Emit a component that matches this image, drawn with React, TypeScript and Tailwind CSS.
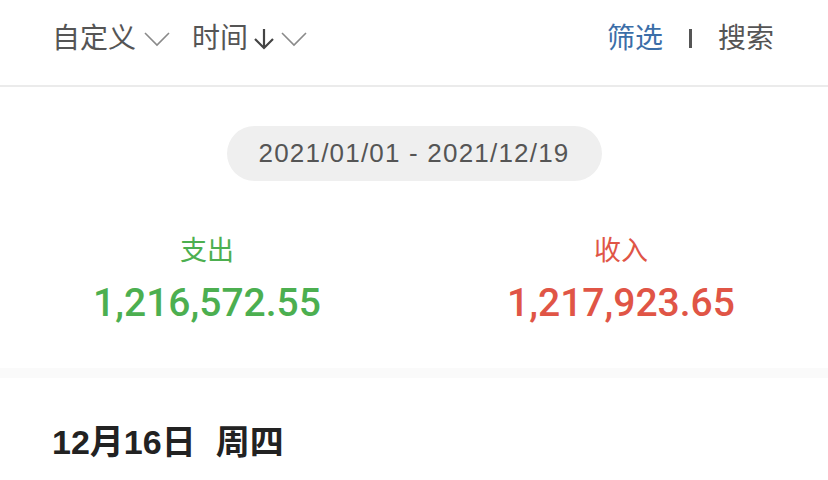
import React from 'react'

const cjk = { fontFamily: '"Liberation Sans", "Noto Sans CJK SC", sans-serif' }

const Chevron = () => (
    <svg width="26" height="16" viewBox="0 0 26 16" fill="none" className="ml-2">
        <path d="M1 2 L13 14 L25 2" stroke="#8a8a8a" strokeWidth="1.6" />
    </svg>
)

const DownArrow = () => (
    <svg width="22" height="24" viewBox="0 0 22 24" fill="none" className="ml-[5px] mr-[-2px]">
        <path d="M11 2 V21 M2 12 L11 21 L20 12" stroke="#444" strokeWidth="2.2" />
    </svg>
)

export default function App() {
    return (
        <div className="w-[828px] h-[480px] bg-white overflow-hidden" style={cjk}>
            {/* top bar */}
            <div className="h-[85px] flex items-center justify-between pl-[52px] pr-[54px] pb-[8px]">
                <div className="flex items-center text-[28px] text-[#555]">
                    <span>自定义</span>
                    <Chevron />
                    <span className="ml-[22px]">时间</span>
                    <DownArrow />
                    <Chevron />
                </div>
                <div className="flex items-center text-[28px]">
                    <span className="text-[#3b6ea8]">筛选</span>
                    <span className="mx-[26px] w-[3px] h-[19px] bg-[#555]"></span>
                    <span className="text-[#555]">搜索</span>
                </div>
            </div>
            <div className="h-[2px] bg-[#ebebeb]"></div>

            {/* summary */}
            <div className="flex justify-center pt-[39px]">
                <div className="w-[375px] h-[55px] rounded-full bg-[#efefef] flex items-center justify-center text-[26px] tracking-[1.2px] text-[#555]">
                    2021/01/01 - 2021/12/19
                </div>
            </div>
            <div className="grid grid-cols-2 pt-[50px] h-[187px]">
                <div className="flex flex-col items-center">
                    <div className="text-[27px] leading-[40px] text-[#4caf50]">支出</div>
                    <div className="text-[39px] leading-[56px] mt-[4px] font-medium text-[#4caf50]" style={{ fontFamily: 'Roboto, "Liberation Sans", sans-serif' }}>1,216,572.55</div>
                </div>
                <div className="flex flex-col items-center">
                    <div className="text-[27px] leading-[40px] text-[#e05546]">收入</div>
                    <div className="text-[39px] leading-[56px] mt-[4px] font-medium text-[#e05546]" style={{ fontFamily: 'Roboto, "Liberation Sans", sans-serif' }}>1,217,923.65</div>
                </div>
            </div>
            <div className="h-[10px] bg-[#fafafa]"></div>

            {/* list */}
            <div className="pl-[52px] pt-[42px] text-[34px] leading-[44px] font-bold text-[#222]">
                12月16日<span className="ml-[20px]">周四</span>
            </div>
        </div>
    )
}
